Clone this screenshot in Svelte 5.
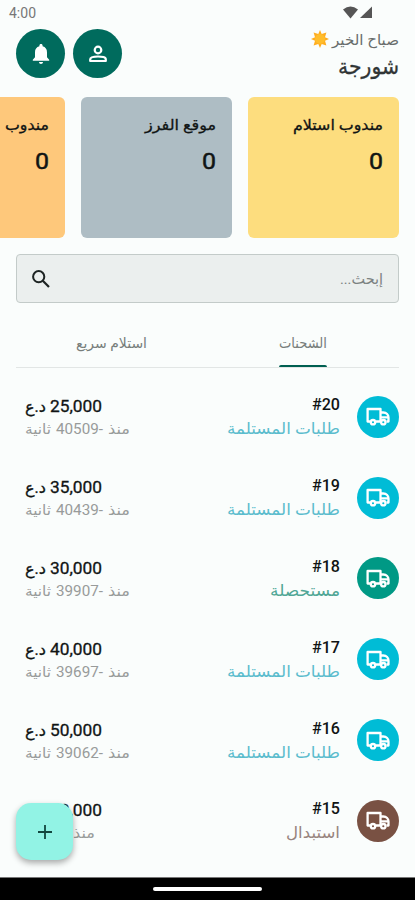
<script>
  const cards = [
    { title: 'مندوب استلام', w: 90, color: '#fddd7e' },
    { title: 'موقع الفرز', w: 71, color: '#aebdc4' },
    { title: 'مندوب', w: 44, color: '#fec87b' }
  ];
  const received = { status: 'طلبات المستلمة', sw: 113, ink: '#5bbccd', color: '#00bcd6' };
  const orders = [
    { id: '#20', price: '25,000', ago: ['منذ', '-40509', 'ثانية'], ...received },
    { id: '#19', price: '35,000', ago: ['منذ', '-40439', 'ثانية'], ...received },
    { id: '#18', price: '30,000', ago: ['منذ', '-39907', 'ثانية'], status: 'مستحصلة', sw: 70, ink: '#4fa695', color: '#009985' },
    { id: '#17', price: '40,000', ago: ['منذ', '-39697', 'ثانية'], ...received },
    { id: '#16', price: '50,000', ago: ['منذ', '-39062', 'ثانية'], ...received },
    { id: '#15', price: '50,000', ago: ['منذ', '', 'دقيقة'], status: 'استبدال', sw: 54, ink: '#98847e', color: '#795143' }
  ];
</script>

{#snippet label(text, w, size, h, base)}
  <svg class="label" width={w} height={h} direction="rtl">
    <text x={w} y={base} font-size={size} textLength={w} lengthAdjust="spacingAndGlyphs">{text}</text>
  </svg>
{/snippet}

<div class="screen" dir="rtl">
  <div class="status" dir="ltr">
    <span>4:00</span>
    <svg width="30" height="13" viewBox="0 0 30 13" fill="#555">
      <path d="M0 3.400Q7.500-2.200 15 3.400L7.500 12.500Z" /><path d="M29 0.500V12H17Z" />
    </svg>
  </div>

  <header>
    <div class="hello">
      <div class="greet">
        {@render label('صباح الخير', 67, 15, 24, 16)}
        <svg class="sun" width="18" height="18" viewBox="0 0 18 18">
          <path fill="#ffad1f" d="M9 0l1.700 4L15.400 2.600 14 7.300 18 9l-4 1.700 1.400 4.700-4.700-1.400L9 18l-1.700-4-4.700 1.400L4 10.700 0 9l4-1.700L2.600 2.600 7.300 4Z" />
          <circle cx="9" cy="9" r="5" fill="#ffbd2b" />
        </svg>
      </div>
      <div class="name">{@render label('شورجة', 61, 22, 32, 19)}</div>
    </div>
    <div class="actions">
      <button aria-label="profile">
        <svg width="20" height="18" viewBox="0 0 20 18" fill="none" stroke="#fff" stroke-width="2.200">
          <circle cx="10" cy="5" r="3.300" /><path d="M2.200 16v-1.600C2.200 12.300 6 11.500 10 11.500s7.800.8 7.800 2.900V16Z" stroke-linejoin="round" />
        </svg>
      </button>
      <button aria-label="notifications">
        <svg width="18" height="22" viewBox="0 0 18 22" fill="#fff">
          <path d="M9 1c-1 0-1.600.7-1.600 1.600v.7C4.500 4 3 6.300 3 9.200v5L.8 16.700v1h16.400v-1L15 14.200v-5c0-2.900-1.500-5.200-4.400-5.900v-.7C10.600 1.700 10 1 9 1ZM7 19h4c0 1.200-.9 2-2 2s-2-.8-2-2Z" />
        </svg>
      </button>
    </div>
  </header>

  <section class="cards">
    {#each cards as c}
      <article style:background={c.color}>
        {@render label(c.title, c.w, 15, 30, 18)}
        <div class="count">{@render label('0', 14, 22.5, 30, 27)}</div>
      </article>
    {/each}
  </section>

  <div class="search">
    {@render label('إبحث...', 43, 15, 28, 19)}
    <svg width="18" height="18" viewBox="0 0 18 18" fill="none" stroke="#1d2423" stroke-width="2">
      <circle cx="6.700" cy="6.700" r="5.600" /><path d="M10.800 10.800L17 17" stroke-width="2.200" />
    </svg>
  </div>

  <nav>
    <div class="tab active">{@render label('الشحنات', 48, 14, 28, 18)}<i></i></div>
    <div class="tab">{@render label('استلام سريع', 71, 14, 28, 18)}</div>
  </nav>

  <main>
    {#each orders as o}
      <div class="row">
        <div class="avatar" style:background={o.color}>
          <svg width="24" height="19" viewBox="0 0 24 19" fill="none" stroke="#fff" stroke-width="2.300">
            <path d="M4 14.500H1.600V2H14.500v12.500H10M14.500 5.500h2.800c3.200 0 5.200 2.300 5.200 5v4h-2M14.500 10.300h7.500" stroke-linejoin="round" />
            <circle cx="7" cy="15.200" r="2.200" /><circle cx="17.300" cy="15.200" r="2.200" />
          </svg>
        </div>
        <div class="info">
          <span class="id">{@render label(o.id, 28, 16, 21, 17)}</span>
          <span style:color={o.ink}>{@render label(o.status, o.sw, 16, 26, 20)}</span>
        </div>
        <div class="amount">
          <div class="price">
            {@render label(o.price, 52, 16, 23, 20)}
            {@render label('د.ع', 21, 16, 23, 20)}
          </div>
          <div class="ago">
            {@render label(o.ago[0], 22, 14, 26, 19)}
            {#if o.ago[1]}{@render label(o.ago[1], 47, 15, 26, 19)}{/if}
            {@render label(o.ago[2], o.ago[1] ? 26 : 43, 14, 26, 19)}
          </div>
        </div>
      </div>
    {/each}
  </main>

  <button class="fab" aria-label="add">
    <svg width="14" height="14" viewBox="0 0 14 14" stroke="#12473f" stroke-width="1.800"><path d="M7 0v14M0 7h14" /></svg>
  </button>
  <div class="home"><i></i></div>
</div>

<style>
  :global(body) { margin: 0; }
  .screen { position: relative; width: 415px; height: 900px; overflow: hidden; background: #fafdfc; display: flex; flex-direction: column; font-family: Roboto, 'DejaVu Sans', sans-serif; color: #101414; }
  .label { display: block; overflow: visible; fill: currentColor; flex: none; }
  .status { height: 29px; box-sizing: border-box; padding: 6px 42px 0 9px; display: flex; justify-content: space-between; font-size: 14px; line-height: 15px; color: #777; }
  header { height: 68px; padding: 0 16px; display: flex; justify-content: space-between; flex: none; }
  .greet { display: flex; gap: 3px; color: #686d6c; height: 26px; }
  .sun { margin-top: 1px; }
  .name { color: #303535; }
  .actions { display: flex; gap: 8px; }
  button { border: 0; padding: 0; display: flex; align-items: center; justify-content: center; }
  .actions button { width: 49px; height: 49px; border-radius: 50%; background: #006b5d; }
  .cards { display: flex; gap: 16px; padding: 0 16px; height: 141px; flex: none; overflow: hidden; }
  article { width: 151px; box-sizing: border-box; flex: none; border-radius: 6px; padding: 15px 16px; }
  article > .label, .price, .name { stroke: currentColor; stroke-width: 0.3px; }
  .count { stroke: currentColor; stroke-width: 0.5px; }
  .search { margin: 16px 16px 0; height: 49px; box-sizing: border-box; border: 1px solid #c3cbc9; border-radius: 4px; background: #ebefee; display: flex; align-items: center; justify-content: space-between; padding: 0 15px; color: #7c8281; flex: none; }
  nav { height: 64px; margin: 0 16px; border-bottom: 1px solid #e2e6e5; display: flex; flex: none; color: #777d7b; }
  .tab { flex: 1; display: flex; flex-direction: column; align-items: center; padding-top: 27px; }
  .tab i { width: 48px; height: 3px; margin-top: 7px; border-radius: 2px 2px 0 0; background: #005f51; }
  main { padding-top: 8.500px; flex: 1; min-height: 0; overflow: hidden; }
  .row { height: 80.800px; padding: 0 16px 0 25px; display: flex; align-items: center; }
  .avatar { width: 42px; height: 42px; border-radius: 50%; display: flex; align-items: center; justify-content: center; flex: none; }
  .info { margin-right: 17px; flex: 1; }
  .id { font-weight: 500; }
  .price { display: flex; justify-content: flex-end; gap: 4px; }
  .ago { display: flex; justify-content: flex-end; gap: 5px; color: #989b9a; }
  .fab { position: absolute; left: 16px; top: 803px; width: 57px; height: 57px; border-radius: 15px; background: #92f3e5; box-shadow: 0 3px 6px #0005; }
  .home { height: 23px; flex: none; background: #000; border-top: 1px solid #777; box-sizing: border-box; display: flex; align-items: center; justify-content: center; }
  .home i { width: 109px; height: 4px; border-radius: 2px; background: #fff; }
</style>
